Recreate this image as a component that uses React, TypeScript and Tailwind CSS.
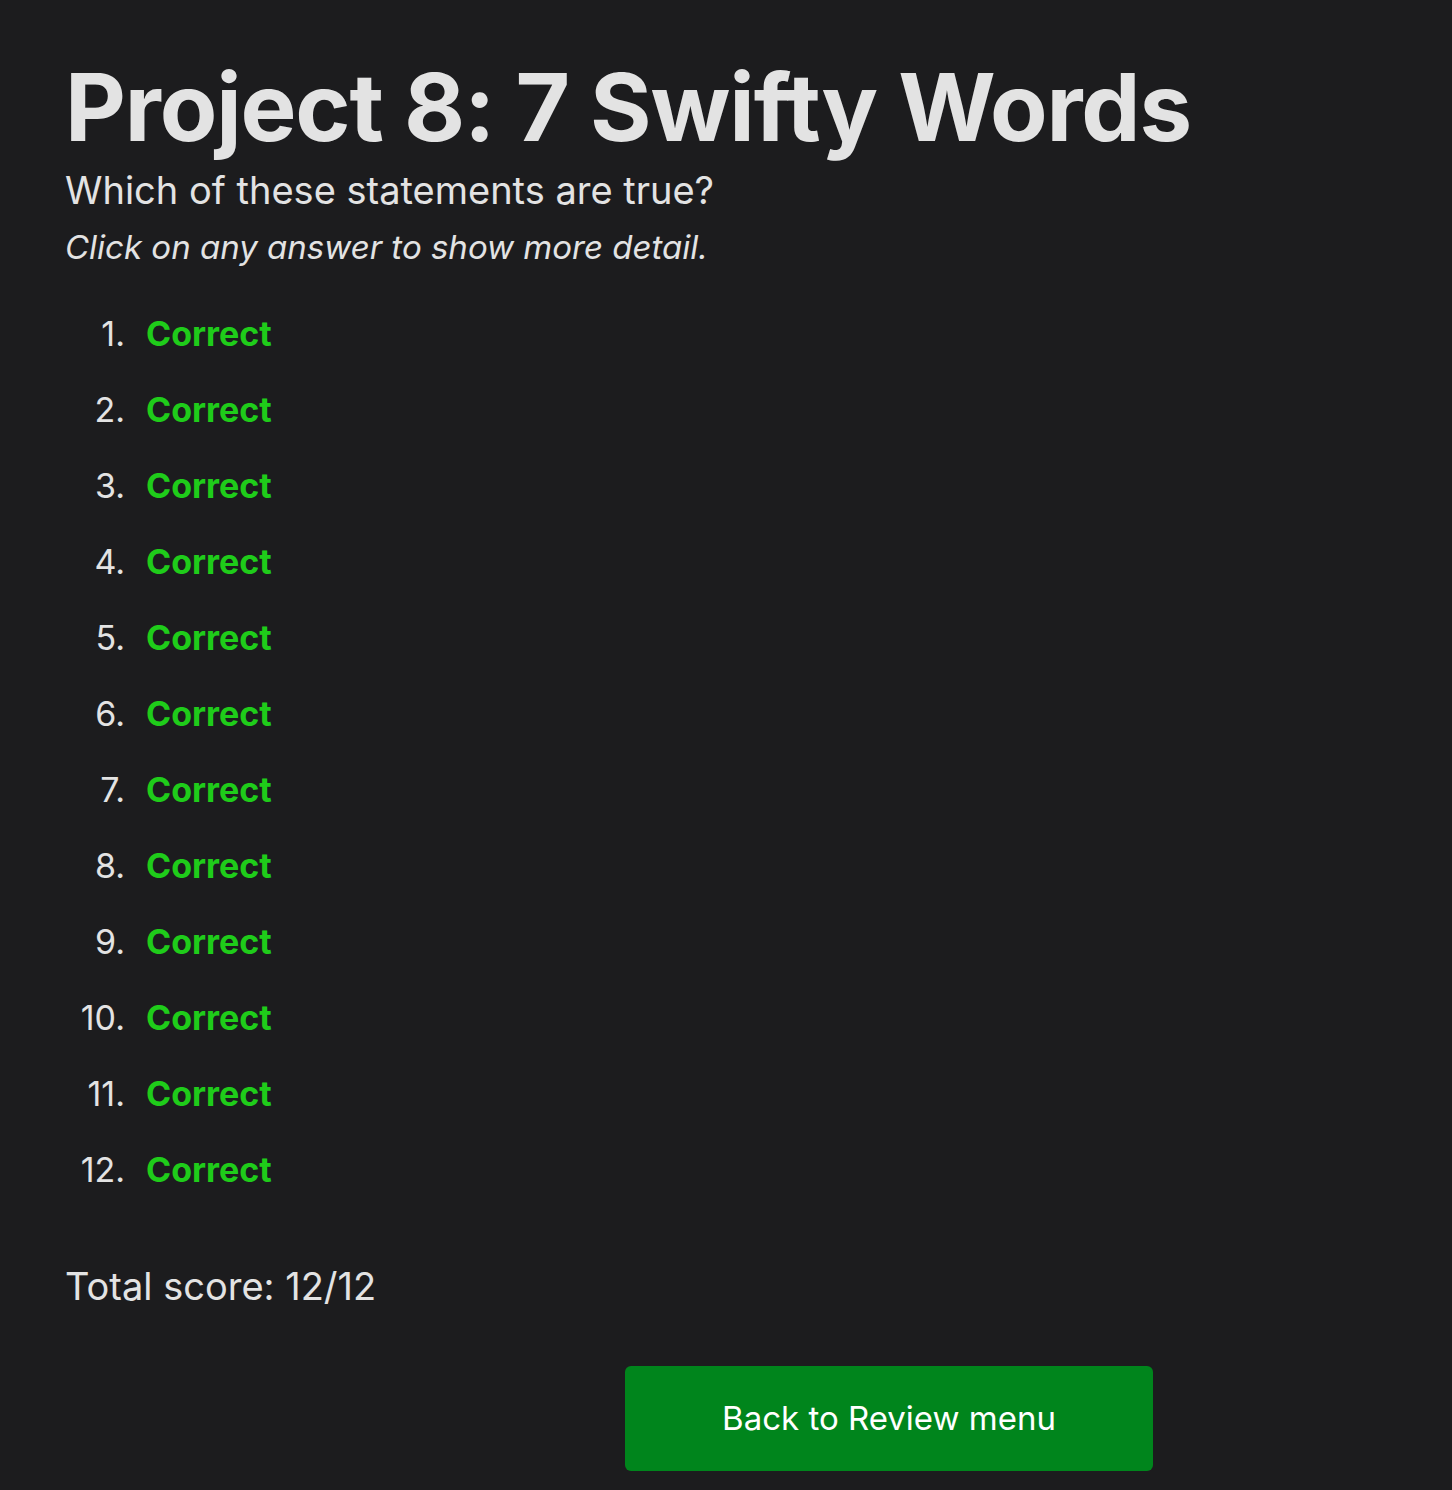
const answers = Array.from({ length: 12 }, (_, i) => i + 1);

export default function App() {
  return (
    <div className="min-h-[1490px] bg-[#1c1c1e] px-[65px] pt-[56px] text-[#e3e3e3] [font-family:Inter,'Noto_Sans',sans-serif]">
      <h1 className="text-[94px] font-bold leading-[1.1] tracking-[-0.012em]">Project 8: 7 Swifty Words</h1>
      <p className="mt-[9px] text-[38px] leading-[1.2]">Which of these statements are true?</p>
      <p className="mt-[14px] text-[33px] italic leading-[1.2]">Click on any answer to show more detail.</p>

      <ol className="mt-[43px] flex flex-col gap-[30px]">
        {answers.map((n) => (
          <li key={n} className="flex items-baseline text-[34px] leading-[46px]">
            <span className="w-[60px] text-right">{n}.</span>
            <span className="ml-[21px] font-bold text-[#1fcc1a]">Correct</span>
          </li>
        ))}
      </ol>

      <p className="mt-[71px] text-[38px] leading-[1.2]">Total score: 12/12</p>

      <div className="mt-[57px] flex">
        <button className="ml-[560px] flex h-[105px] w-[528px] items-center justify-center rounded-[6px] bg-[#00851c] text-[33px] text-white">
          Back to Review menu
        </button>
      </div>
    </div>
  );
}
